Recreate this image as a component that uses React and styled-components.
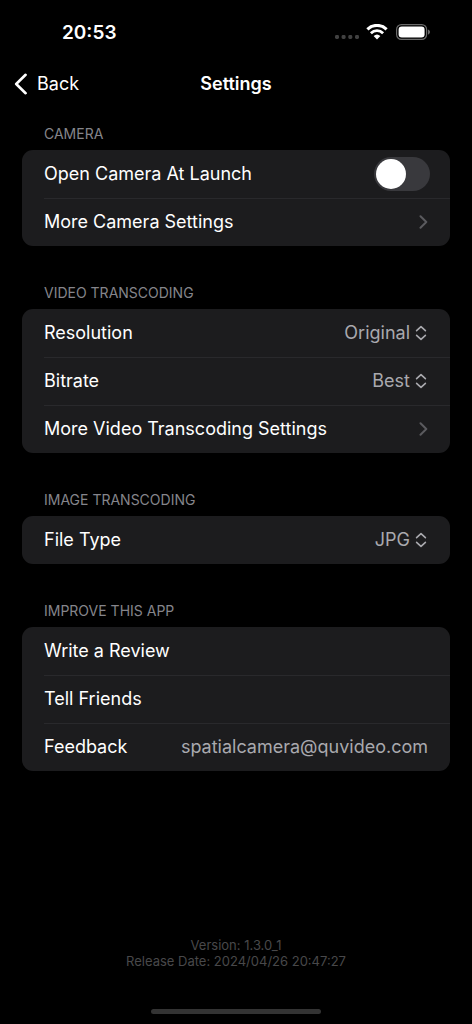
import React from 'react';
import styled, { createGlobalStyle } from 'styled-components';

const sections = [
  {
    title: 'Camera',
    rows: [
      { type: 'toggle', label: 'Open Camera At Launch' },
      { type: 'link', label: 'More Camera Settings' },
    ],
  },
  {
    title: 'Video Transcoding',
    rows: [
      { type: 'select', label: 'Resolution', options: ['Original', '1080p', '720p'] },
      { type: 'select', label: 'Bitrate', options: ['Best', 'High', 'Medium'] },
      { type: 'link', label: 'More Video Transcoding Settings' },
    ],
  },
  {
    title: 'Image Transcoding',
    rows: [
      { type: 'select', label: 'File Type', options: ['JPG', 'HEIC', 'PNG'] },
    ],
  },
  {
    title: 'Improve This App',
    rows: [
      { type: 'button', label: 'Write a Review' },
      { type: 'button', label: 'Tell Friends' },
      { type: 'mail', label: 'Feedback', value: 'spatialcamera@quvideo.com' },
    ],
  },
];

// Icons
const Wifi = () => (
  <svg width="22" height="16" viewBox="0 0 22 16" fill="none" stroke="#fff" aria-hidden="true">
    <path d="M1.4 5.3a13.8 13.8 0 0 1 19.2 0" strokeWidth="3.1" />
    <path d="M4.9 9.2a8.700 8.700 0 0 1 12.2 0" strokeWidth="2.8" />
    <path d="M7.6 12a5 5 0 0 1 6.8 0L11 15.600z" fill="#fff" stroke="none" />
  </svg>
);

const Battery = () => (
  <svg width="35" height="16" viewBox="0 0 35 16" fill="none" aria-hidden="true">
    <rect x="0.6" y="0.6" width="30" height="14.8" rx="4.8" stroke="#6a6a6a" strokeWidth="1.2" />
    <rect x="2.6" y="2.6" width="26" height="10.8" rx="3.2" fill="#fff" />
    <path d="M32 5.4c1.200.4 2 1.400 2 2.600s-.8 2.200-2 2.600z" fill="#6a6a6a" />
  </svg>
);

const Dots = () => (
  <svg width="24" height="5" viewBox="0 0 24 5" fill="#414141" aria-hidden="true">
    <rect x="0" width="4" height="4" rx="1.4" />
    <rect x="6.6" width="4" height="4" rx="1.4" />
    <rect x="13.3" width="4" height="4" rx="1.4" />
    <rect x="20" width="4" height="4" rx="1.4" />
  </svg>
);

const BackArrow = () => (
  <svg width="14" height="22" viewBox="0 0 14 22" fill="none" stroke="#fff" strokeWidth="2.6" strokeLinecap="round" strokeLinejoin="round" aria-hidden="true">
    <path d="M11.6 1.8 2.2 11l9.4 9.2" />
  </svg>
);

const Chevron = () => (
  <svg width="9" height="14" viewBox="0 0 9 14" fill="none" stroke="#5a5a5e" strokeWidth="2" strokeLinecap="round" strokeLinejoin="round" aria-hidden="true">
    <path d="M1.5 1.3 7.3 7l-5.8 5.7" />
  </svg>
);

const UpDown = () => (
  <svg width="13" height="16" viewBox="0 0 13 16" fill="none" stroke="#a9a9ae" strokeWidth="1.6" strokeLinecap="round" strokeLinejoin="round" aria-hidden="true">
    <path d="M1.6 5.6 6 1.6l4.4 4M1.6 10.4l4.4 4 4.4-4" />
  </svg>
);

function SettingRow({ row }) {
  const [checked, setChecked] = React.useState(false);
  const id = row.label.toLowerCase().replace(/ /g, '-');

  switch (row.type) {
    case 'toggle':
      return (
        <Row $control>
          <label htmlFor={id}>{row.label}</label>
          <Switch id={id} type="checkbox" role="switch" checked={checked} onChange={e => setChecked(e.target.checked)} />
        </Row>
      );
    case 'select':
      return (
        <Row>
          <label htmlFor={id}>{row.label}</label>
          <Picker>
            <Select id={id}>
              {row.options.map(option => <option key={option}>{option}</option>)}
            </Select>
            <UpDown />
          </Picker>
        </Row>
      );
    case 'link':
      return (
        <Row as="a" href={`#${id}`}>
          <span>{row.label}</span>
          <Chevron />
        </Row>
      );
    case 'mail':
      return (
        <Row as="a" href={`mailto:${row.value}`}>
          <span>{row.label}</span>
          <Value>{row.value}</Value>
        </Row>
      );
    default:
      return <Row as="button" type="button">{row.label}</Row>;
  }
}

function App() {
  return (
    <>
      <GlobalStyle />
      <Page>
        <StatusBar>
          <Time>20:53</Time>
          <StatusIcons>
            <Dots />
            <Wifi />
            <Battery />
          </StatusIcons>
        </StatusBar>
        <NavBar>
          <BackButton type="button">
            <BackArrow />
            Back
          </BackButton>
          <Title>Settings</Title>
        </NavBar>
        <Main>
          {sections.map(section => (
            <section key={section.title}>
              <SectionTitle>{section.title}</SectionTitle>
              <Card>
                {section.rows.map(row => <SettingRow key={row.label} row={row} />)}
              </Card>
            </section>
          ))}
        </Main>
        <Footer>
          <div>Version: 1.3.0_1</div>
          <div>Release Date: 2024/04/26 20:47:27</div>
        </Footer>
        <HomeIndicator />
      </Page>
    </>
  );
}

const GlobalStyle = createGlobalStyle`
  * {
    box-sizing: border-box;
  }
  body {
    margin: 0;
    background: #000;
    color: #fff;
    font-family: Inter, "Liberation Sans", sans-serif;
    font-size: 18px;
    line-height: 24px;
  }
`;

const Page = styled.div`
  display: flex;
  flex-direction: column;
  min-height: 100vh;
`;

const StatusBar = styled.div`
  display: flex;
  align-items: center;
  justify-content: space-between;
  padding: 20px 41px 0 62px;
`;

const Time = styled.span`
  font-size: 19px;
  font-weight: 600;
  line-height: 26px;
`;

const StatusIcons = styled.div`
  display: flex;
  align-items: flex-end;
  gap: 8px;
  padding-bottom: 2px;

  svg:first-child {
    margin-right: -1px;
  }
`;

const NavBar = styled.header`
  display: grid;
  grid-template-columns: 1fr auto 1fr;
  align-items: center;
  height: 44px;
  margin-top: 16px;
  padding: 0 14px;
`;

const BackButton = styled.button`
  display: flex;
  align-items: center;
  justify-self: start;
  gap: 9px;
  padding: 0;
  border: 0;
  background: none;
  color: inherit;
  font: inherit;
`;

const Title = styled.h1`
  margin: 0;
  font-size: 18px;
  font-weight: 600;
`;

const Main = styled.main`
  display: flex;
  flex-direction: column;
  gap: 37px;
  padding: 18px 22px;
`;

const SectionTitle = styled.h2`
  margin: 0;
  padding: 0 22px 6px;
  color: #85858b;
  font-size: 14px;
  font-weight: 400;
  line-height: 20px;
  text-transform: uppercase;
`;

const Card = styled.div`
  overflow: hidden;
  border-radius: 11px;
  background: #1c1c1e;
`;

const Row = styled.div`
  display: flex;
  align-items: center;
  justify-content: space-between;
  width: 100%;
  height: 48px;
  padding: 0 ${props => (props.$control ? '20px' : '22px')} 0 22px;
  border: 0;
  background: none;
  color: inherit;
  font: inherit;
  text-align: left;
  text-decoration: none;

  & + & {
    background: linear-gradient(#29292c, #29292c) 22px 0 / 100% 1px no-repeat;
  }
`;

const Switch = styled.input`
  appearance: none;
  display: flex;
  width: 56px;
  height: 34px;
  margin: 0;
  padding: 2px;
  border-radius: 17px;
  background: #39393d;

  &::before {
    content: '';
    width: 30px;
    height: 30px;
    border-radius: 50%;
    background: #fff;
  }

  &:checked {
    justify-content: flex-end;
    background: #30d158;
  }
`;

const Picker = styled.div`
  display: flex;
  align-items: center;
  gap: 5px;
`;

const Select = styled.select`
  appearance: none;
  field-sizing: content;
  padding: 0;
  border: 0;
  background: none;
  color: #a9a9ae;
  font: inherit;
  text-align-last: right;
`;

const Value = styled.span`
  color: #a9a9ae;
`;

const Footer = styled.footer`
  margin-top: auto;
  color: #48484a;
  font-size: 13px;
  line-height: 16px;
  text-align: center;
`;

const HomeIndicator = styled.div`
  width: 36%;
  height: 5px;
  margin: 40px auto 10px;
  border-radius: 3px;
  background: #333;
`;

export default App;
